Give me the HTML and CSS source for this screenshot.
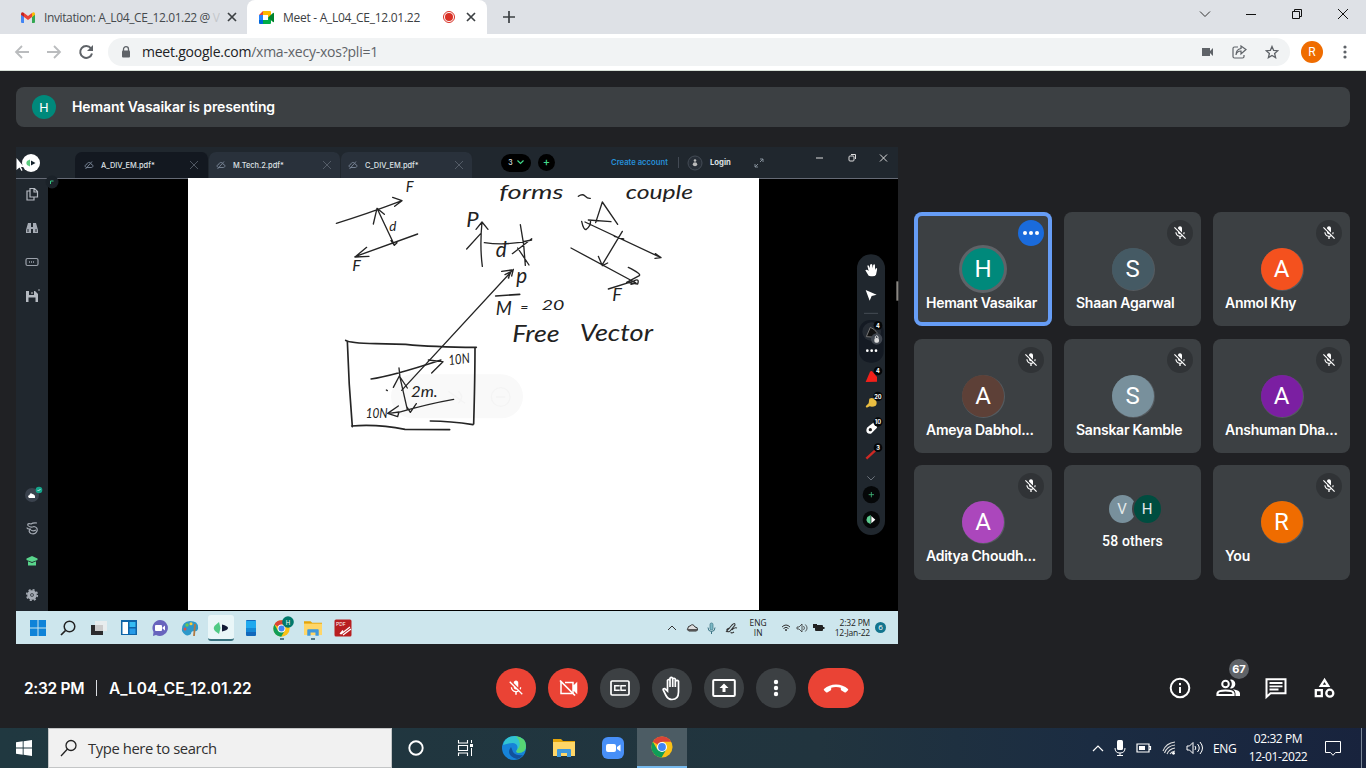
FILE: index.html
```html
<!DOCTYPE html>
<html lang="en">
<head>
<meta charset="utf-8">
<title>Meet - A_L04_CE_12.01.22</title>
<link rel="stylesheet" href="styles.css">
</head>
<body>
<svg class="defs" width="0" height="0">
  <defs>
    <symbol id="mic-off" viewBox="0 0 24 24"><path d="M19 11h-1.7c0 .74-.16 1.43-.43 2.05l1.23 1.23c.56-.98.9-2.09.9-3.28zm-4.02.17c0-.06.02-.11.02-.17V5c0-1.66-1.34-3-3-3S9 3.34 9 5v.18l5.98 5.99zM4.27 3 3 4.27l6.01 6.01V11c0 1.66 1.33 3 2.99 3 .22 0 .44-.03.65-.08l1.66 1.66c-.71.33-1.5.52-2.31.52-2.76 0-5.3-2.1-5.3-5.1H5c0 3.41 2.72 6.23 6 6.72V21h2v-3.28c.91-.13 1.77-.45 2.54-.9L19.73 21 21 19.73 4.27 3z"/></symbol>
    <symbol id="close" viewBox="0 0 10 10"><path d="M1 1l8 8M9 1l-8 8" fill="none" stroke="currentColor"/></symbol>
    <symbol id="cloud" viewBox="0 0 10 10"><path d="M2.600 7.500C.2 7 1 4.300 2.700 4.600 3.100 2 6.500 1.600 7.100 4.300 9.400 4.200 9.600 7.500 7.300 7.500zM1.500 9 8 1.500" fill="none" stroke="#7b8799" stroke-width=".9"/></symbol>
    <symbol id="chrome" viewBox="0 0 48 48"><circle cx="24" cy="24" r="23" fill="#fbc116"/><path d="M24 24 4 12.500A23 23 0 0 1 44 12.500H24z" fill="#db4437"/><path d="M4 12.500A23 23 0 0 0 23 47l10-17-9-6-10 6z" fill="#0f9d58"/><circle cx="24" cy="24" r="11" fill="#fff"/><circle cx="24" cy="24" r="8.500" fill="#4285f4"/></symbol>
    <symbol id="folder" viewBox="0 0 22 20"><path d="M0 1h8l2 2h12v15H0z" fill="#e5a50a"/><path d="M0 4h22v14H0z" fill="#ffd667"/><path d="M4 19v-7q0-1 1-1h12q1 0 1 1v7h-4v-4H8v4z" fill="#3f98db"/></symbol>
  </defs>
</svg>

<header class="tabs">
  <div class="tab tab-mail">
    <svg width="14" height="11" viewBox="0 0 14 11"><path d="M0 1.800V10q0 1 1 1h2V4.700z" fill="#4285f4"/><path d="M14 1.800V10q0 1-1 1h-2V4.700z" fill="#34a853"/><path d="M11 1v4l3-2.300V1.500Q13-.5 11 1z" fill="#fbbc04"/><path d="M3 1v4L0 2.700V1.500Q1-.5 3 1z" fill="#c5221f"/><path d="M3 1l4 3 4-3v4L7 8 3 5z" fill="#ea4335"/></svg>
    <span class="tab-title title-mail">Invitation: A_L04_CE_12.01.22 @ <i>V</i></span>
    <svg class="x" width="10" height="10"><use href="#close"/></svg>
  </div>
  <div class="tab tab-meet">
    <svg width="16" height="13" viewBox="0 0 16 13"><path d="M0 4h4v5H0z" fill="#2684fc"/><path d="M0 9h4v4H1q-1 0-1-1z" fill="#0066da"/><path d="M4 0v4H0z" fill="#ea4335"/><path d="M4 0h7q1 0 1 1v5L9 7V4H4z" fill="#ffba00"/><path d="M4 9h5V7l3-1v6q0 1-1 1H4z" fill="#00ac47"/><path d="M9 6.500 14 2q1-.6 1 .5v8q0 1-1 .5z" fill="#00832d"/></svg>
    <span class="tab-title title-meet">Meet - A_L04_CE_12.01.22</span>
    <svg class="rec" width="14" height="14"><circle cx="7" cy="7" r="5.500" fill="none" stroke="#d93025"/><circle cx="7" cy="7" r="4" fill="#d93025"/></svg>
    <svg class="x" width="10" height="10"><use href="#close"/></svg>
  </div>
  <svg class="new-tab" width="12" height="12"><path d="M6 0v12M0 6h12" stroke="#3c4043" stroke-width="1.700"/></svg>
  <div class="win-controls">
    <svg width="12" height="12"><path d="M1 3.500l5 5 5-5" fill="none" stroke="#333"/></svg>
    <svg width="12" height="12"><path d="M1 6.500h10" stroke="#111"/></svg>
    <svg width="12" height="12"><path d="M1.500 3.500h7v7h-7zM3.500 3.500v-2h7v7h-2" fill="none" stroke="#111"/></svg>
    <svg width="12" height="12"><path d="M1 1l10 10M11 1 1 11" stroke="#111"/></svg>
  </div>
</header>

<nav class="toolbar">
  <svg width="16" height="16"><path d="M15 8H2M8 2 2 8l6 6" fill="none" stroke="#babcbe" stroke-width="1.800"/></svg>
  <svg width="16" height="16"><path d="M1 8h13M8 2l6 6-6 6" fill="none" stroke="#babcbe" stroke-width="1.800"/></svg>
  <svg width="16" height="16"><path d="M13 4.300A6 6 0 1 0 14 9.500" fill="none" stroke="#5f6368" stroke-width="2"/><path d="M15 1v6H9z" fill="#5f6368"/></svg>
  <div class="omnibox">
    <svg width="10" height="12"><path d="M2.500 5V3.200a2.500 2.500 0 0 1 5 0V5" fill="none" stroke="#5f6368" stroke-width="1.300"/><rect x="1" y="4.500" width="8" height="7" rx="1" fill="#5f6368"/></svg>
    <span class="url"><b>meet.google.com</b>/xma-xecy-xos?pli=1</span>
    <svg class="cam" width="13" height="10"><path d="M1 1h8v3l3-3v8L9 6v3H1z" fill="#5f6368"/></svg>
    <svg width="15" height="14"><path d="M6 2H2.500Q1 2 1 3.500v8Q1 13 2.500 13h8q1.500 0 1.500-1.500V10M4 10c.5-3 2.500-4 5-4v3l5-4.500L9 1v2.500C6 4 4 6 4 10z" fill="none" stroke="#5f6368" stroke-width="1.200"/></svg>
    <svg width="14" height="14"><path d="M7 1.500 8.600 5.300l4.200.4-3.200 2.800 1 4.100L7 10.400l-3.600 2.200 1-4.100L1.200 5.700l4.200-.4z" fill="none" stroke="#5f6368" stroke-width="1.300"/></svg>
  </div>
  <span class="profile">R</span>
  <svg class="kebab" width="4" height="14" fill="#5f6368"><circle cx="2" cy="2" r="1.600"/><circle cx="2" cy="7" r="1.600"/><circle cx="2" cy="12" r="1.600"/></svg>
</nav>

<main class="meet">
  <div class="banner"><span class="banner-avatar">H</span><span class="banner-text">Hemant Vasaikar is presenting</span></div>
  <div class="stage">
    <section class="share">
      <div class="app-head">
        <svg class="app-logo" width="34" height="22"><circle cx="15" cy="11" r="9" fill="#fff"/><path d="M11 9 14 7.500v7l-3-1.500q-1.500-2 0-4z" fill="#5ccb7f"/><path d="M15 8.500l4.500 2.500-4.500 2.500z" fill="#14212b"/><path d="M.5 6v12l3-2.500 2 3.500 1-.7-1.500-3.300H8z" fill="#fff"/></svg>
        <div class="doc doc-on"><svg width="10" height="10"><use href="#cloud"/></svg><span>A_DIV_EM.pdf*</span><svg class="dx" width="10" height="10"><use href="#close"/></svg></div>
        <div class="doc"><svg width="10" height="10"><use href="#cloud"/></svg><span>M.Tech.2.pdf*</span><svg class="dx" width="10" height="10"><use href="#close"/></svg></div>
        <div class="doc"><svg width="10" height="10"><use href="#cloud"/></svg><span>C_DIV_EM.pdf*</span><svg class="dx" width="10" height="10"><use href="#close"/></svg></div>
        <div class="pill">3 <svg width="7" height="5"><path d="M.5.5l3 3 3-3" fill="none" stroke="#42d88a" stroke-width="1.200"/></svg></div>
        <div class="plus">+</div>
        <span class="create">Create account</span>
        <span class="rule"></span>
        <svg class="who" width="16" height="16"><circle cx="8" cy="8" r="7" fill="#272e37" stroke="#434b55"/><circle cx="8" cy="5.500" r="1.300" fill="#bbb"/><ellipse cx="8" cy="9.200" rx="2.200" ry="2" fill="#bbb"/></svg>
        <span class="login">Login</span>
        <svg class="expand" width="10" height="10"><path d="M6 4l3-3M6 1h3v3M4 6 1 9M1 6v3h3" fill="none" stroke="#8d97a3" stroke-width=".9"/></svg>
        <svg class="app-win" width="74" height="10"><path d="M2 5h7" stroke="#ddd"/><rect x="35" y="3" width="5" height="5" rx="1" fill="none" stroke="#ddd"/><path d="M37 1.500h4.500V6" fill="none" stroke="#ddd"/><path d="M66 1.500l7 7M73 1.500l-7 7" stroke="#ddd"/></svg>
      </div>
      <div class="app-body">
        <aside class="rail">
          <svg width="14" height="14"><path d="M5 1.500h4.500l3 3V10H5zM9 1.500V5h3.500M5 4H2v9h7v-3" fill="none" stroke="#b5bac1" stroke-width="1.200"/></svg>
          <svg width="14" height="14"><path d="M3 2h3v4h2V2h3l2 7v3H8V8H6v4H1V9z" fill="#a5abb4"/><path d="M3 8v3M11 8v3" stroke="#20272e"/></svg>
          <svg width="14" height="14"><rect x="1" y="3.500" width="12" height="7" rx="1.500" fill="none" stroke="#9ba1aa" stroke-width="1.200"/><path d="M4 7h6" stroke="#9ba1aa" stroke-width="1.500" stroke-dasharray="1 1"/></svg>
          <svg width="16" height="14" viewBox="-1 0 16 14"><path d="M1 2h9l3 3v8H1z" fill="#b5bac1"/><path d="M4 2v4h5V2M3.500 13V8.500h7V13" fill="#20272e"/><path d="M7 3v2" stroke="#ccc"/><circle cx="14" cy="1" r=".8" fill="#b5bac1"/></svg>
          <svg class="rail-cloud" width="20" height="20"><circle cx="8" cy="11" r="7" fill="#3a424d"/><path d="M5 14q-2-2 .5-3 .7-3 3-1 3 .5 2.500 4z" fill="#fff"/><circle cx="15" cy="6" r="3.300" fill="#15a58b"/><path d="M13.500 6l1 1 2-2" fill="none" stroke="#fff" stroke-width=".7"/></svg>
          <svg class="rail-pen" width="14" height="14"><path d="M12 2Q8 1.500 6 3 2 2 3 4.500 5 7 9 5.500q4 1 3 4.500-2 4-6 2.500Q3 11 5 8q-3 0-3-1.500M5 8q2 3 6 1" fill="none" stroke="#a5abb4" stroke-width="1.200"/></svg>
          <svg width="14" height="14"><path d="M1.500 4.500 7 2l5.500 2.500V6L7 8 1.500 6z" fill="#59d58c"/><path d="M3 7.300 7 9l4-1.700v4.200H3z" fill="#59d58c"/></svg>
          <svg width="14" height="14"><circle cx="7" cy="7" r="3.300" fill="none" stroke="#a5abb4" stroke-width="3"/><circle cx="7" cy="7" r="5.300" fill="none" stroke="#a5abb4" stroke-width="1.600" stroke-dasharray="2.080"/><circle cx="7" cy="7" r="1" fill="#a5abb4"/></svg>
        </aside>
        <div class="canvas">
          <div class="paper">
            <svg class="ink" viewBox="0 0 1140 780" width="380" height="260">
              <rect x="198" y="589" width="396" height="132" rx="66" fill="#f9f9f9"/>
              <g fill="none" stroke="#f4f4f4" stroke-width="4"><circle cx="527" cy="657" r="28"/><path d="M513 657h28M370 640l50 36M400 640q20 16 0 36"/></g>
              <g class="strokes">
                <path d="M34 136Q120 110 231 68l-28-10M231 68l-22 17M145 138l11-47 22 18M156 91l51 108M278 168 90 236M125 208l-35 29 42-2M198 188l10 14 8-8"/>
                <path d="M472 265q-8-60-1-133l-18 22M471 132l18 22M425 213l42-46M478 194q70 10 142-8M586 140l10 60 5 62M620 182l-58 45M578 210l34 51"/>
                <path d="M780 132l228 107-17-12M1008 239l-18 2M738 210l195 105-15 4M892 160 832 260M820 235l12 28 16-8M868 175l28 8M812 134l20-62 46 67M790 126l68 5M770 130q6 28 14 24 15-12 12-27M910 268q40 20 33 25l-38 20 33 5q6-18-10-10M850 333l80-25"/>
                <path d="M230 637 565 274M530 280l30-4-10 24M540 290l15-8-4 18M565 274l-5 20"/>
                <path d="M512 354l72-5" class="bold"/>
                <path d="M62 487q10 8 90 10l90 2q80 8 212 9M450 508q0 90-4 230M67 490q4 130 15 256M80 744q80-6 160 10l134 1M316 729q60 0 128 11" class="bold"/>
                <path d="M138 603q60-8 210-57M310 546l44 5-34 34M222 570l3 28 22 97M205 628l18-34 24 36M386 664q-80 14-168 40M220 684l-32 22 30 10 4-14-30 4M246 687l10 16 18-26M184 636l3 2"/>
              </g>
              <path d="M760 55q12-9 20-1t16 7" class="pen"/>
              <g class="hand">
                <text x="242" y="42" font-size="44">F</text>
                <text x="193" y="159" font-size="40">d</text>
                <text x="82" y="280" font-size="48">F</text>
                <text x="523" y="62" font-size="60" textLength="192" lengthAdjust="spacingAndGlyphs">forms</text>
                <text x="902" y="62" font-size="58" textLength="202" lengthAdjust="spacingAndGlyphs">couple</text>
                <text x="424" y="146" font-size="66">P</text>
                <text x="512" y="238" font-size="62">d</text>
                <text x="574" y="314" font-size="62">p</text>
                <text x="862" y="368" font-size="54">F</text>
                <text x="512" y="411" font-size="56">M</text>
                <text x="586" y="402" font-size="42">=</text>
                <text x="650" y="396" font-size="42" textLength="68" lengthAdjust="spacingAndGlyphs">20</text>
                <text x="562" y="493" font-size="70" textLength="142" lengthAdjust="spacingAndGlyphs">Free</text>
                <text x="764" y="490" font-size="70" textLength="220" lengthAdjust="spacingAndGlyphs">Vector</text>
                <text x="372" y="562" font-size="42" textLength="64" lengthAdjust="spacingAndGlyphs" transform="rotate(-7 372 562)">10N</text>
                <text x="258" y="656" font-size="48" textLength="80" lengthAdjust="spacingAndGlyphs">2m.</text>
                <text x="122" y="720" font-size="40" textLength="66" lengthAdjust="spacingAndGlyphs">10N</text>
              </g>
            </svg>
          </div>
          <svg class="tools" viewBox="0 0 195 885" width="65" height="295">
            <rect x="51" y="28" width="84" height="842" rx="42" fill="#20272e"/>
            <path d="M172 109v58" stroke="#8a8782" stroke-width="6"/>
            <path d="M86 92 76 76q3-5 10 2L82 62q4-5 8 8v-10q4-6 7 0v10l3-11q6-3 5 4v12l3-6q5 0 3 6l-3 14q-4 8-22 3z" fill="#fff"/>
            <path d="M77 135l33 14-15 4-6 14z" fill="#fff"/><path d="M72 205h42" stroke="#454c55" stroke-width="3"/>
            <rect x="57" y="225" width="74" height="128" rx="34" fill="#141a23"/>
            <circle cx="95" cy="260" r="28" fill="#252b33"/><path d="M79 275l12-28q12 4 20 16v14z" fill="#111" stroke="#777" stroke-width="3"/><circle cx="110" cy="282" r="17" fill="#414750"/><rect x="103" y="279" width="14" height="14" rx="5" fill="#ddd"/><path d="M106 280v-5q4-6 8 0v5" fill="none" stroke="#ddd" stroke-width="3"/>
            <g fill="#fff"><circle cx="82" cy="317" r="4"/><circle cx="95" cy="317" r="4"/><circle cx="108" cy="317" r="4"/></g>
            <path d="M77 411l13-31q4-4 8 0l13 16v14z" fill="#f3201a"/><path d="M77 484l9-9 2-14q11-5 19 4 6 10 0 17-9 5-18 2l-9 4z" fill="#e9bd41"/>
            <path d="M79 555q0-8 8-12l15-11q8 2 9 16l-18 18q-14 2-14-11z" fill="#fff"/><circle cx="91" cy="554" r="5" fill="#222"/><path d="M79 641l27-25" stroke="#ce2924" stroke-width="7"/>
            <path d="M82 694l11 11 11-11" fill="none" stroke="#6b727b" stroke-width="3"/>
            <g fill="#050708"><circle cx="114" cy="241" r="13"/><circle cx="114" cy="378" r="13"/><circle cx="114" cy="454" r="14"/><circle cx="114" cy="531" r="14"/><circle cx="114" cy="608" r="13"/><circle cx="94" cy="749" r="26"/><circle cx="94" cy="824" r="26"/></g>
            <g class="counts"><text x="114" y="248">4</text><text x="114" y="385">4</text><text x="114" y="461">20</text><text x="114" y="538">10</text><text x="114" y="615">3</text></g>
            <path d="M94 741v16M86 749h16" stroke="#42b87b" stroke-width="2.500"/>
            <path d="M82 816l10-6v28l-10-6q-5-8 0-16z" fill="#5ccb8f"/><path d="M94 813l12 11-12 11z" fill="#fff"/>
          </svg>
          <svg class="corner" width="14" height="14"><circle cx="7" cy="7" r="6.500" fill="#1b2229"/><path d="M5.500 9V6h3" fill="none" stroke="#39c784"/></svg>
        </div>
      </div>
      <div class="w11">
        <svg width="18" height="18"><path d="M1 1h7.500v7.500H1zM9.500 1H17v7.500H9.500zM1 9.500h7.500V17H1zM9.500 9.500H17V17H9.500z" fill="#0f83d8"/></svg>
        <svg width="18" height="18"><circle cx="10.500" cy="7.500" r="5.300" fill="none" stroke="#222" stroke-width="1.500"/><path d="M6.500 11.500 2 16" stroke="#222" stroke-width="1.700"/></svg>
        <svg width="18" height="18"><path d="M1 6h12v10H1z" fill="#2c2c2e"/><path d="M5 2h12v10H5z" fill="#eee" opacity=".82"/></svg>
        <svg width="18" height="18"><path d="M1 1h16v15H1z" fill="#0e64a7"/><path d="M2.500 3H8v12H2.500z" fill="#fff"/><path d="M9.500 3h6v5h-6z" fill="#35bdf3"/><path d="M9.500 9.500h6V15h-6z" fill="#269be8"/></svg>
        <svg width="18" height="18"><path d="M9 1a8 8 0 1 1-4 15l-3 1 .5-4A8 8 0 0 1 9 1z" fill="#6864bd"/><rect x="4" y="6" width="7" height="6" rx="1" fill="#fff"/><path d="M11.500 8.500 14 6.500v5l-2.500-2z" fill="#fff"/></svg>
        <svg width="18" height="18"><path d="M1 12Q0 3 9 2q9 0 8 8-1 3-4 2-3 0-3 3-5 4-9-3z" fill="#2c98ca"/><circle cx="6" cy="6" r="1.700" fill="#67c84f"/><circle cx="10" cy="4.800" r="1.500" fill="#f9cc40"/><circle cx="4" cy="10" r="1.500" fill="#d9524d"/><path d="M14 5l-1 12" stroke="#b07a43" stroke-width="1.800"/></svg>
        <span class="w11-on"><svg width="18" height="18"><path d="M3 6.500 7 3l1.500 6L7 15l-4-3q-2.500-3 0-5.500z" fill="#4fca84"/><path d="M10 5.500q6 1.500 6 3.500t-6 3.500z" fill="#111a36"/></svg></span>
        <svg width="18" height="18"><rect x="4" y="1" width="10" height="16" rx="1" fill="#1268bb"/><path d="M4 2h10v9H4z" fill="#20a9ee"/><path d="M4 9h10v4H4z" fill="#1588d6"/></svg>
        <svg class="w11-chrome" width="24" height="24"><use href="#chrome" x="2" y="4" width="17" height="17"/><circle cx="17" cy="6" r="5.800" fill="#00796b"/><text x="17" y="8.500" class="hm">H</text><path d="M9 23h4" stroke="#537b88" stroke-width="2"/></svg>
        <svg width="18" height="24"><use href="#folder" x="0" y="4" width="18" height="17"/><path d="M7 23h4" stroke="#537b88" stroke-width="2"/></svg>
        <svg width="18" height="18"><rect x=".5" y=".5" width="17" height="17" rx="1.500" fill="#b81e20"/><text x="2" y="6.500" class="pdf">PDF</text><path d="M7 15l9-7M9 16l8-6M6 15l3-3.500" stroke="#fff" stroke-width="1.200"/></svg>
        <div class="w11-tray">
          <svg width="10" height="8"><path d="M1 6l4-4 4 4" fill="none" stroke="#333"/></svg>
          <svg width="12" height="10"><path d="M3 8q-3-1-1-3 0-2 2-2 3-3 5 1 3 0 2.500 3l-1 1z" fill="#ddd" stroke="#333"/><path d="M2 8h9V6H2z" fill="#555"/></svg>
          <svg width="9" height="12"><rect x="3" y="1" width="3" height="7" rx="1.500" fill="#7bb9c6" stroke="#397282" stroke-width=".7"/><path d="M1 5.500q0 4 3.500 4T8 5.500M4.500 9.500V12" fill="none" stroke="#397282"/></svg>
          <svg width="13" height="12"><path d="M1 10l6-7q3-3 3 0L6 8Q4 11 2 9q-1-2 3-3M7 8q2-3 5-2M6 10q0 2 3 0" fill="none" stroke="#333" stroke-width="1.100"/></svg>
          <span class="lang">ENG<br>IN</span>
          <svg width="10" height="9"><path d="M1 4q4-4 8 0M2.500 5.500q2.500-2.500 5 0" fill="none" stroke="#333"/><circle cx="5" cy="7" r="1" fill="#333"/></svg>
          <svg width="12" height="10"><path d="M1 4h2l3-3v8L3 6H1zM7.500 3q2 2 0 4M9.300 1.500q3.500 3.500 0 7" fill="none" stroke="#333" stroke-width=".8"/></svg>
          <svg width="12" height="9"><rect x="2" y="2" width="8" height="6" rx="1" fill="#222"/><path d="M10 4h1.500v2H10zM0 1h4v4H0z" fill="#222"/></svg>
          <span class="clock">2:32 PM<br>12-Jan-22</span>
          <span class="six">6</span>
        </div>
      </div>
    </section>

    <section class="tiles">
      <article class="tile speaking"><span class="more"><i></i><i></i><i></i></span><span class="face" style="background:#00897b">H</span><span class="name">Hemant Vasaikar</span></article>
      <article class="tile"><span class="mute"><svg width="16" height="16"><use href="#mic-off"/></svg></span><span class="face" style="background:#455a64">S</span><span class="name">Shaan Agarwal</span></article>
      <article class="tile"><span class="mute"><svg width="16" height="16"><use href="#mic-off"/></svg></span><span class="face" style="background:#f4511e">A</span><span class="name">Anmol Khy</span></article>
      <article class="tile"><span class="mute"><svg width="16" height="16"><use href="#mic-off"/></svg></span><span class="face" style="background:#5d4037">A</span><span class="name">Ameya Dabhol...</span></article>
      <article class="tile"><span class="mute"><svg width="16" height="16"><use href="#mic-off"/></svg></span><span class="face" style="background:#78909c">S</span><span class="name">Sanskar Kamble</span></article>
      <article class="tile"><span class="mute"><svg width="16" height="16"><use href="#mic-off"/></svg></span><span class="face" style="background:#7b1fa2">A</span><span class="name">Anshuman Dha...</span></article>
      <article class="tile"><span class="mute"><svg width="16" height="16"><use href="#mic-off"/></svg></span><span class="face" style="background:#ab47bc">A</span><span class="name">Aditya Choudh...</span></article>
      <article class="tile others"><div class="pair"><span style="background:#78909c">V</span><span style="background:#004d40">H</span></div><span class="count">58 others</span></article>
      <article class="tile"><span class="mute"><svg width="16" height="16"><use href="#mic-off"/></svg></span><span class="face" style="background:#ef6c00">R</span><span class="name">You</span></article>
    </section>
  </div>

  <footer class="callbar">
    <div class="meeting"><span class="time">2:32 PM</span><span class="sep"></span><span class="code">A_L04_CE_12.01.22</span></div>
    <div class="controls">
      <span class="btn red"><svg width="18" height="18"><use href="#mic-off"/></svg></span>
      <span class="btn red"><svg width="20" height="20" viewBox="0 0 20 20"><path d="M7 4.500h8v11M15 9l3.500-3.500v9L15 11zM4 4.500H3v11h11.500" fill="none" stroke="#fff" stroke-width="1.500"/><path d="M15 8.500 18.500 5v10L15 11.500z"/><path d="M2 2.500l15 15" stroke="#fff" stroke-width="1.700"/></svg></span>
      <span class="btn"><svg width="20" height="18" viewBox="0 0 20 18"><rect x="1" y="2" width="18" height="14" rx="1.200" fill="none" stroke="#fff" stroke-width="1.700"/><path d="M9 7.500V6.800H4.800v4.400H9v-.8M15.200 7.500V6.800H11v4.400h4.200v-.8" fill="none" stroke="#fff" stroke-width="1.500"/></svg></span>
      <span class="btn"><svg width="22" height="26" viewBox="0 0 22 26"><path d="M6.500 14V5.500q1.200-2 2.500 0V12M9 12V3.300q1.300-2 2.700 0V12M11.700 12V4q1.300-1.500 2.600 0v8M14.300 12V6.300q2-2 3.200 0V17q0 7.500-6.500 7.500-4 0-6-4L2.200 15q-.5-1.600 1.500-1.500L6.500 16v-3" fill="none" stroke="#fff" stroke-width="1.700"/></svg></span>
      <span class="btn"><svg width="24" height="20" viewBox="0 0 24 20"><rect x="1.200" y="2" width="21.600" height="16" rx="1" fill="none" stroke="#fff" stroke-width="2"/><path d="M12 5.500 7.500 10h3v4h3v-4h3z"/></svg></span>
      <span class="btn"><svg width="6" height="18"><circle cx="3" cy="3" r="2.200"/><circle cx="3" cy="9" r="2.200"/><circle cx="3" cy="15" r="2.200"/></svg></span>
      <span class="btn red hang"><svg width="26" height="10" viewBox="0 0 26 10"><path d="M13 1.500Q20 1.500 25 6q.5.700 0 1.300l-2 1.900q-.8.600-1.600 0L18.500 7.500q-.7-.5-.7-1.200V4.700Q13 3.200 8.200 4.700v1.600q0 .7-.7 1.200L4.600 9.200q-.8.600-1.600 0L1 7.300Q.5 6.700 1 6q5-4.500 12-4.500z"/></svg></span>
    </div>
    <div class="side">
      <svg width="24" height="24" viewBox="0 0 24 24"><circle cx="12" cy="12" r="9.300" fill="none" stroke="#fff" stroke-width="2"/><path d="M11 11h2v6h-2zM11 7h2v2.200h-2z"/></svg>
      <span class="people"><svg width="26" height="24" viewBox="0 0 26 24"><circle cx="10.500" cy="8" r="3.300" fill="none" stroke="#fff" stroke-width="2"/><path d="M15 3.700a4.400 4.400 0 1 1 0 8.600 6 6 0 0 0 0-8.600z"/><path d="M2.500 19v-1.500q0-3 8-3t8 3V19z" fill="none" stroke="#fff" stroke-width="2.200"/><path d="M18 13.300q7 1 7 4.200V20h-4.500v-2.500q0-2.500-2.500-4.200z"/></svg><b>67</b></span>
      <svg width="24" height="24" viewBox="0 0 24 24"><path d="M2.500 21V3.200h19v14h-15z" fill="none" stroke="#fff" stroke-width="2"/><path d="M5.500 7h13M5.500 10.300h13M5.500 13.500h9" stroke="#fff" stroke-width="1.800"/></svg>
      <svg width="24" height="24" viewBox="0 0 24 24"><path d="M12.500 4 8.800 9.800h7.400zM3.800 14.200h6v6h-6z" fill="none" stroke="#fff" stroke-width="2.300"/><circle cx="17.800" cy="17.200" r="3.500" fill="none" stroke="#fff" stroke-width="2.300"/></svg>
    </div>
  </footer>
</main>

<div class="taskbar">
  <svg class="start" width="16" height="16"><path d="M0 2.300 6.700 1.300V7.600H0zM7.600 1.200 16 0v7.600H7.600zM0 8.500h6.700v6.200L0 13.700zM7.600 8.500H16V16l-8.400-1.200z" fill="#fff"/></svg>
  <div class="search"><svg width="18" height="18"><circle cx="11" cy="6.500" r="5" fill="none" stroke="#222" stroke-width="1.300"/><path d="M7.500 10 1 17" stroke="#222" stroke-width="1.300"/></svg><span>Type here to search</span></div>
  <div class="pins">
    <span><svg width="18" height="18"><circle cx="9" cy="9" r="6.700" fill="none" stroke="#fff" stroke-width="1.900"/></svg></span>
    <span><svg width="18" height="18"><path d="M2.500 1v3h9V1M2.500 17v-3h9v3M2.500 6.500h9v5h-9z" fill="none" stroke="#fff" stroke-width="1.100"/><path d="M15.500 1v3M15.500 9v8" stroke="#fff"/><path d="M14 5h3v3h-3z" fill="#fff"/></svg></span>
    <span><svg width="24" height="24"><circle cx="12" cy="12" r="12" fill="#1683d8"/><path d="M1 9Q3 0 13 0q11 1 11 10 0 7-8 7-3-1-1-3 2-6-4-7-5 0-10 2z" fill="#31c4d1"/><path d="M14 0q10 2 10 10 0 7-8 7-3-1-1-3 6-6-1-14z" fill="#62d95b" opacity=".8"/><path d="M9 11q-6 8 6 12 4-1 6-4-7 1-10-3-1-3-2-5z" fill="#12529c"/></svg></span>
    <span><svg width="22" height="20"><use href="#folder"/></svg></span>
    <span><svg width="24" height="24"><rect x="1" y="1" width="22" height="22" rx="6" fill="#478ff7"/><rect x="5" y="8" width="10" height="8" rx="2" fill="#fff"/><path d="M16 11l3.500-2.500v7L16 13z" fill="#fff"/></svg></span>
    <span class="active"><svg width="22" height="22"><use href="#chrome"/></svg></span>
  </div>
  <div class="tray">
    <svg width="12" height="10"><path d="M1 8l5-5 5 5" fill="none" stroke="#fff" stroke-width="1.200"/></svg>
    <svg width="12" height="18"><rect x="3" y="1" width="6" height="10" rx="1.500" fill="#fff"/><path d="M1 9q0 5 5 5t5-5M6 14v3M3 16.500h6" fill="none" stroke="#fff"/></svg>
    <svg width="16" height="12"><path d="M1 2h12v8H1zM13 4.500h1.500v3H13" fill="none" stroke="#fff" stroke-width="1.200"/><path d="M3 4h6v4H3z" fill="#fff"/></svg>
    <svg width="14" height="14"><path d="M1 10Q4 2 13 1M2.500 12Q5 5 13 4M5 13q2-5 8-6M8 13q1-2 5-3" fill="none" stroke="#ddd" stroke-width="1.100"/><circle cx="11.500" cy="12.300" r="1.400" fill="#fff"/></svg>
    <svg width="18" height="14"><path d="M1 5h2.500L7 1.500v11L3.500 9H1zM9 5q1.600 2 0 4M11.500 3q3.500 4 0 8M14 1q5 6 0 12" fill="none" stroke="#fff"/></svg>
    <span class="eng">ENG</span>
    <span class="when"><span>02:32 PM</span><span>12-01-2022</span></span>
    <svg width="16" height="17"><path d="M.5 1.500h15v11h-5L8 15.300 5.500 12.500h-5z" fill="none" stroke="#fff"/></svg>
    <span class="peek"></span>
  </div>
</div>
</body>
</html>
```
FILE: styles.css
```css
* { box-sizing: border-box; }
body { margin: 0; width: 1366px; height: 768px; overflow: hidden; display: flex; flex-direction: column; background: #202124; font-family: "Open Sans", "Noto Sans", sans-serif; }
svg { display: block; flex: none; }
span { white-space: nowrap; }
.defs { position: absolute; }

/* browser tabs */
.tabs { height: 34px; flex: none; background: #dee1e6; display: flex; align-items: center; }
.tab { height: 34px; display: flex; align-items: center; font-size: 12px; color: #45494d; }
.tab-mail { width: 247px; padding-left: 21px; }
.tab-meet { width: 240px; background: #fff; border-radius: 8px 8px 0 0; padding-left: 12px; color: #3c4043; }
.tab-title { overflow: hidden; }
.tab-title i { font-style: normal; color: #c4c7cb; }
.title-mail { width: 176px; margin-left: 9px; letter-spacing: -.38px; }
.title-meet { width: 142px; margin-left: 8px; letter-spacing: -.28px; }
.x { color: #3c4043; stroke-width: 1.7; margin-left: 7px; }
.rec { margin-left: 17px; }
.tab-meet .x { margin-left: 10px; }
.new-tab { margin-left: 16px; }
.win-controls { margin-left: auto; display: flex; gap: 34px; padding-right: 17px; margin-top: -6px; }

.toolbar { height: 37px; flex: none; background: #fff; border-bottom: 1px solid #d6dfd6; display: flex; align-items: center; padding-left: 14px; gap: 16px; }
.omnibox { width: 1182px; height: 28px; background: #f1f3f4; border-radius: 14px; display: flex; align-items: center; gap: 18px; padding: 0 11px 0 13px; margin-left: -2px; }
.url { font-size: 14px; color: #5f6368; letter-spacing: -.23px; margin: -1px auto 0 -7px; }
.url b { color: #202124; font-weight: 400; }
.profile { width: 22px; height: 22px; border-radius: 50%; background: #ef6c00; color: #fff; font: 12px/22px Roboto, sans-serif; text-align: center; margin-left: -5px; }
.kebab { margin-left: 4px; }

/* meeting */
.meet { height: 657px; flex: none; display: flex; flex-direction: column; background: #202124; padding: 16px 16px 0; color: #fff; }
.banner { height: 40px; background: #3c4043; border-radius: 8px; display: flex; align-items: center; padding-left: 16px; }
.banner-avatar { width: 24px; height: 24px; border-radius: 50%; background: #00897b; font: 13px/25px Roboto, sans-serif; text-align: center; }
.banner-text { margin-left: 16px; margin-top: -2px; font: 600 14px Inter, sans-serif; letter-spacing: -.1px; }
.stage { display: flex; margin-top: 20px; height: 501px; }
.share { width: 882px; flex: none; height: 497px; display: flex; flex-direction: column; background: #000; }
.app-head { height: 32px; background: #20272e; border-bottom: 1px solid #656a75; display: flex; align-items: center; font: 500 7.4px Inter, sans-serif; color: #dfe2e6; }
.app-logo { margin-right: 25px; }
.doc { width: 132px; height: 26px; margin-top: 5px; background: #29313b; border-radius: 7px 7px 0 0; display: flex; align-items: center; padding: 0 8px 0 7px; border-right: 1px solid #20272e; }
.doc-on { background: #131820; width: 134px; padding: 0 9px; }
.doc span { margin-left: 7px; }
.dx { color: #606772; margin-left: auto; stroke-width: .8; }
.pill { width: 30px; height: 18px; background: #000; border-radius: 9px; margin-left: 28px; display: flex; align-items: center; justify-content: center; gap: 4px; font-size: 7px; }
.plus { width: 17px; height: 17px; background: #000; border-radius: 50%; margin-left: 7px; color: #42d88a; text-align: center; font-size: 11px; line-height: 16px; }
.create { width: 67px; margin-left: 56px; color: #268fd8; font-weight: 600; font-size: 7.7px; }
.rule { width: 1px; height: 11px; background: #434a54; }
.who { margin-left: 8px; }
.login { margin-left: 7px; width: 44px; font-weight: 700; font-size: 7.7px; }
.app-win { margin: -9px 0 0 50px; }
.app-body { height: 432px; display: flex; }
.rail { width: 32px; background: #20272e; display: flex; flex-direction: column; align-items: center; padding-top: 8px; gap: 20px; }
.rail-cloud { margin: 161px 0 -5px 4px; }
.rail-pen { margin-top: 2px; margin-bottom: -1px; }
.canvas { flex: 1; position: relative; padding-left: 140px; background: #000; }
.paper { width: 571px; height: 432px; background: #fff; padding-left: 137px; }
.ink { margin-top: -1px; }
.strokes path, .pen { fill: none; stroke: #252525; stroke-width: 4; stroke-linejoin: round; stroke-linecap: round; }
.strokes .bold { stroke-width: 5; }
.hand { font-family: Lato, sans-serif; font-style: italic; font-weight: 400; fill: #222; }
.tools { position: absolute; left: 792px; top: 66px; }
.counts { font: 700 17px Inter, sans-serif; fill: #fff; text-anchor: middle; }
.corner { position: absolute; left: -3px; top: -4px; }
.w11 { height: 33px; background: #cde6ed; display: flex; align-items: center; padding-left: 13px; color: #222; gap: 12.4px; }
.w11-on { width: 26px; height: 26px; background: #e9f6f8; border-radius: 3px; margin: 0 -5px 0 -3px; border-bottom: 2px solid #38717e; padding: 4px; }
.hm { font: 6px Inter, sans-serif; fill: #fff; text-anchor: middle; }
.pdf { font: 5px Inter, sans-serif; fill: #fff; }
.w11-chrome { margin: 0 -4px 0 -1px; }
.w11-tray { margin-left: auto; display: flex; align-items: center; font-size: 8.5px; line-height: 10px; padding-right: 12px; gap: 5px; }
.w11-tray svg:nth-of-type(-n+4) { margin-right: 4px; }
.lang { text-align: center; margin: 0 9px 0 3px; font-size: 8.4px; }
.clock { text-align: right; margin-left: 5px; letter-spacing: -.2px; }
.six { width: 11px; height: 11px; background: #13758e; color: #fff; border-radius: 50%; text-align: center; font-size: 8px; }

/* participants */
.tiles { width: 437px; height: 368px; margin: 65px 0 0 16px; display: grid; grid-template-columns: 138px 137px 137px; grid-template-rows: 114px 114px 115px; column-gap: 12px; row-gap: 12.5px; flex: none; }
.tile { position: relative; background: #3c4043; border-radius: 8px; display: flex; flex-direction: column; align-items: center; padding-top: 36px; }
.speaking { box-shadow: inset 0 0 0 4px #669df6; }
.face { width: 42px; height: 42px; border-radius: 50%; font: 24px/43px Roboto, sans-serif; text-align: center; box-shadow: .5px .5px 0 .5px #555b60; }
.speaking .face { box-shadow: 0 0 0 3px #5f6368; }
.name { align-self: flex-start; margin: 4px 0 0 12px; font: 600 14px/18px Inter, sans-serif; letter-spacing: -.25px; }
.mute, .more { position: absolute; top: 8px; right: 8px; width: 26px; height: 26px; border-radius: 50%; background: #303336; display: flex; align-items: center; justify-content: center; fill: #fff; }
.more { background: #1a6bdc; gap: 2px; }
.more i { width: 4px; height: 4px; border-radius: 50%; background: #fff; }
.others { padding-top: 30px; }
.pair { display: flex; margin-left: 4px; }
.pair span { width: 27px; height: 28px; border-radius: 50%; font: 15px/29px Roboto, sans-serif; text-align: center; color: #e3e8ea; }
.pair span + span { margin-left: -2px; box-shadow: 0 0 0 2px #3c4043; }
.count { font: 500 14px/18px Roboto, sans-serif; margin-top: 9px; letter-spacing: .15px; }

.callbar { height: 80px; display: flex; align-items: center; fill: #fff; }
.meeting { width: 480px; display: flex; align-items: center; padding-left: 8px; font: 600 15.5px Inter, sans-serif; }
.time { width: 72px; letter-spacing: -.3px; }
.code { letter-spacing: -.03px; }
.sep { width: 1px; height: 16px; background: #dadce0; margin-right: 12px; }
.controls { display: flex; gap: 12px; }
.btn { width: 40px; height: 40px; border-radius: 20px; background: #3c4043; display: flex; align-items: center; justify-content: center; }
.red { background: #ea4335; }
.hang { width: 56px; }
.side { display: flex; gap: 24px; margin-left: auto; padding-right: 14px; }
.people { position: relative; margin: 0 -1px; }
.people b { position: absolute; left: 14px; top: -17px; width: 20px; height: 20px; border-radius: 50%; background: #5f6368; font: 700 11px/20px Inter, sans-serif; text-align: center; }

/* desktop taskbar */
.taskbar { height: 40px; flex: none; display: flex; align-items: center; background: linear-gradient(90deg, #203840, #21343e 60%, #1b2c42 80%, #18233d); color: #fff; }
.start { margin: 0 16px; }
.search { width: 344px; height: 40px; border: 1px solid #c3c5c6; background: #f1f1f1; display: flex; align-items: center; color: #303030; font-size: 14.8px; letter-spacing: -.4px; padding-left: 11px; gap: 10px; }
.pins { display: flex; margin-left: -1px; }
.pins span { width: 49.3px; height: 40px; display: flex; align-items: center; justify-content: center; }
.pins .active { background: #4c5c64; border-bottom: 2px solid #76b9ed; }
.tray { margin-left: auto; display: flex; align-items: center; font-size: 12px; }
.tray svg { margin-right: 10px; }
.eng { width: 36px; letter-spacing: -.3px; margin-left: -1px; }
.when { width: 58px; display: flex; flex-direction: column; align-items: center; line-height: 18px; letter-spacing: -.4px; margin-right: 18px; }
.tray .peek { width: 1px; height: 40px; background: #7a8797; margin: 0 4px 0 20px; }
.tray .when + svg { margin-right: 0; }
```
